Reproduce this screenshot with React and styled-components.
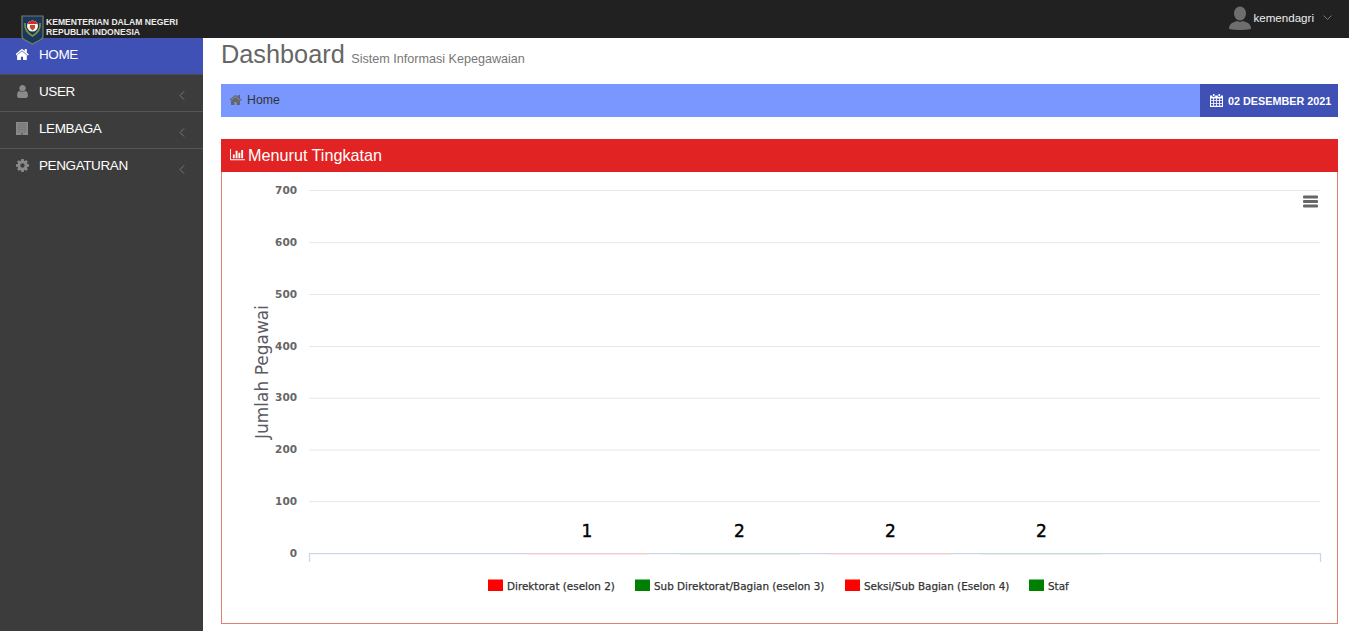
import React from "react";
import styled, { createGlobalStyle } from "styled-components";

const Global = createGlobalStyle`
  html, body { margin: 0; padding: 0; height: 100%; background: #fff; }
  body { font-family: "Liberation Sans", Arial, sans-serif; overflow: hidden; }
  * { box-sizing: border-box; }
`;

const Page = styled.div`width: 1349px; height: 631px; display: flex; flex-direction: column; position: relative;`;
const TopBar = styled.header`height: 38px; background: #212121; display: flex; align-items: center; justify-content: space-between; flex: none;`;
const Brand = styled.div`display: flex; align-items: flex-start; padding-left: 21px; height: 38px; position: relative; z-index: 2;`;
const Logo = styled.svg`width: 23px; height: 30px; margin-top: 15px; flex: none; margin-right: 2px;`;
const BrandText = styled.div`color: #eaeaea; font-size: 8.6px; font-weight: 700; line-height: 10px; margin-top: 17px; white-space: nowrap;`;
const UserBox = styled.div`display: flex; align-items: center; padding-right: 17px; color: #eee; font-size: 11.6px; height: 38px; padding-bottom: 3px;`;
const Avatar = styled.svg`width: 24px; height: 24px; fill: #6e6e6e; margin-right: 1px; margin-top: 1px;`;
const Caret = styled.svg`width: 9px; height: 6px; margin-left: 9px; fill: none; stroke: #777; stroke-width: 1;`;

const Body = styled.div`flex: 1; display: flex; min-height: 0;`;
const Sidebar = styled.nav`width: 203px; background: #3c3c3c; flex: none;`;
const NavItem = styled.div`
  height: 37px; display: flex; align-items: center; padding: 0 16px 4px 16px; font-size: 13.5px; letter-spacing: -0.4px;
  color: #fff; background: ${p => (p.$active ? "#3f51b5" : "transparent")};
  border-bottom: 1px solid ${p => (p.$active ? "#4c4c4c" : "#565656")};
  &:last-child { border-bottom-color: transparent; }
`;
const NavIcon = styled.svg`width: 13px; height: 13px; margin-right: 10px; flex: none; fill: ${p => (p.$active ? "#fff" : "#8a8a8a")};`;
const NavLabel = styled.span`flex: 1;`;
const Angle = styled.svg`width: 6px; height: 9px; margin: 9px 2px 0 0; fill: none; stroke: #777; stroke-width: 1;`;

const Main = styled.main`flex: 1; padding: 0 11px 0 18px; min-width: 0; display: flex; flex-direction: column;`;
const TitleRow = styled.div`height: 46px; display: flex; align-items: baseline; white-space: nowrap; padding-top: 2px;`;
const Title = styled.h1`margin: 0; font-size: 25.3px; font-weight: 400; color: #666;`;
const Sub = styled.small`font-size: 12.6px; color: #777; margin-left: 6.5px;`;
const Crumbs = styled.div`height: 33px; background: #7997ff; display: flex; justify-content: space-between; margin-bottom: 22px; flex: none;`;
const Crumb = styled.div`display: flex; align-items: center; padding: 0 0 1px 9px; color: #333; font-size: 12.3px;`;
const CrumbIcon = styled.svg`width: 12px; height: 12px; fill: #666; margin-right: 5px;`;
const DateBox = styled.div`width: 138px; background: #3f51b5; color: #fff; font-size: 10.8px; font-weight: 700; display: flex; align-items: center; padding-left: 10px; white-space: nowrap;`;
const CalIcon = styled.svg`width: 13px; height: 13px; fill: #fff; margin-right: 5px; flex: none;`;
const Panel = styled.section`height: 485px; border: 1px solid #e0806f; border-top: none; flex: none; display: flex; flex-direction: column;`;
const PanelHead = styled.div`height: 33px; margin: 0 -1px; background: #e12323; color: #fff; display: flex; align-items: center; padding: 0 0 0 9px; font-size: 16.2px; flex: none;`;
const HeadIcon = styled.svg`width: 15px; height: 13px; fill: #fff; margin-right: 3px;`;
const Chart = styled.svg`display: block; width: 1115px; height: 451px; font-family: "DejaVu Sans", sans-serif;`;

const HOME = "M1408 992v480q0 26-19 45t-45 19h-384v-384h-256v384h-384q-26 0-45-19t-19-45v-480q0-1 .5-3t.5-3l575-474 575 474q1 2 1 6zm223-69l-62 74q-8 9-21 11h-3q-13 0-21-7l-692-577-692 577q-12 8-24 7-13-2-21-11l-62-74q-8-10-7-23.5t11-21.5l719-599q32-26 76-26t76 26l244 204v-195q0-14 9-23t23-9h192q14 0 23 9t9 23v408l219 182q10 8 11 21.5t-7 23.5z";
const USER = "M1536 1399q0 109-62.5 187t-150.5 78h-854q-88 0-150.5-78t-62.5-187q0-85 8.5-160.5t31.5-152 58.5-131 94-89 134.5-34.5q131 128 313 128t313-128q76 0 134.5 34.5t94 89 58.5 131 31.5 152 8.5 160.5zm-256-887q0 159-112.5 271.5t-271.5 112.5-271.5-112.5-112.5-271.5 112.5-271.5 271.5-112.5 271.5 112.5 112.5 271.5z";
const COG = "M1152 896q0-106-75-181t-181-75-181 75-75 181 75 181 181 75 181-75 75-181zm512-109v222q0 12-8 23t-20 13l-185 28q-19 54-39 91 35 50 107 138 10 12 10 25t-9 23q-27 37-99 108t-94 71q-12 0-26-9l-138-108q-44 23-91 38-16 136-29 186-7 28-36 28h-222q-14 0-24.5-8.5t-11.5-21.5l-28-184q-49-16-90-37l-141 107q-10 9-25 9-14 0-25-11-126-114-165-168-7-10-7-23 0-12 8-23 15-21 51-66.5t54-70.5q-27-50-41-99l-183-27q-13-2-21-12.5t-8-23.5v-222q0-12 8-23t19-13l186-28q14-46 39-92-40-57-107-138-10-12-10-24 0-10 9-23 26-36 98.5-107.5t94.5-71.5q13 0 26 10l138 107q44-23 91-38 16-136 29-186 7-28 36-28h222q14 0 24.5 8.5t11.5 21.5l28 184q49 16 90 37l142-107q9-9 24-9 13 0 25 10 129 119 165 170 7 8 7 22 0 12-8 23-15 21-51 66.5t-54 70.5q26 50 41 98l183 28q13 2 21 12.5t8 23.5z";
const BARS = "M640 896v512h-256v-512h256zm384-512v1024h-256v-1024h256zm1024 1152v128h-2048v-1536h128v1408h1920zm-640-896v768h-256v-768h256zm384-384v1152h-256v-1152h256z";

const BuildingIcon = () => (
  <NavIcon viewBox="0 0 13 13">
    <path d="M0 0h12v13H0z" />
    <path fill="#6b6b6b" d="M1.500 1.500h9v.8h-9zM1.500 3.500h9v.8h-9zM1.500 5.500h9v.8h-9zM1.500 7.500h9v.8h-9zM1.500 9.500h3v.8h-3zM7.500 9.500h3v.8h-3zM5 10.500h2v2.500H5z" />
  </NavIcon>
);

const items = [
  { label: "HOME", d: HOME, active: true },
  { label: "USER", d: USER },
  { label: "LEMBAGA", building: true },
  { label: "PENGATURAN", d: COG },
];

const gridLines = [
  [700, 190.5], [600, 242.7], [500, 294.5], [400, 346.5], [300, 398.2], [200, 450], [100, 501.7], [0, 553.5],
];
const shift = (x) => x - 222;
const dy = (y) => y - 172;
const labels = [[587, "1"], [739.5, "2"], [890.5, "2"], [1041.5, "2"]];
const baseBars = [
  [527, 648, "#f4c9c9"], [679, 800, "#c9d9d5"], [830, 951, "#f4c9c9"], [981, 1102, "#c9d9d5"],
];
const legend = [
  [488, "#ff0000", 507, "Direktorat (eselon 2)"],
  [635, "#008000", 654, "Sub Direktorat/Bagian (eselon 3)"],
  [845, "#ff0000", 864, "Seksi/Sub Bagian (Eselon 4)"],
  [1029, "#008000", 1048, "Staf"],
];

export default function App() {
  return (
    <Page>
      <Global />
      <TopBar>
        <Brand>
          <Logo viewBox="0 0 23 30">
            <path d="M1 1h21v20q0 3-3 4l-7.500 4-7.500-4q-3-1-3-4z" fill="#173a5c" stroke="#7c7a62" strokeWidth="1.200" />
            <path d="M4 8q-1 8 7.500 13q8.500-5 7.500-13" fill="none" stroke="#8a8f3c" strokeWidth="1.600" />
            <circle cx="11.500" cy="11" r="5.500" fill="#f5f5f0" />
            <path d="M6.500 9a5.500 5.500 0 0 1 10 0z" fill="#d92a20" />
            <path d="M9 10h5v3l-2.500 2.500L9 13z" fill="#c8472a" />
          </Logo>
          <BrandText>
            KEMENTERIAN DALAM NEGERI
            <br />
            REPUBLIK INDONESIA
          </BrandText>
        </Brand>
        <UserBox>
          <Avatar viewBox="0 0 24 24">
            <ellipse cx="12" cy="7.500" rx="6" ry="7" />
            <path d="M1 23q0-5 4-6.500l4-1.500q3 1.500 6 0l4 1.500q4 1.500 4 6.500q-11 2-22 0z" />
          </Avatar>
          kemendagri
          <Caret viewBox="0 0 9 6"><path d="M.5.500l4 4 4-4" /></Caret>
        </UserBox>
      </TopBar>
      <Body>
        <Sidebar>
          {items.map((it) => (
            <NavItem key={it.label} $active={it.active}>
              {it.building ? (
                <BuildingIcon />
              ) : (
                <NavIcon viewBox="128 128 1536 1536" $active={it.active}><path d={it.d} /></NavIcon>
              )}
              <NavLabel>{it.label}</NavLabel>
              {!it.active && <Angle viewBox="0 0 6 9"><path d="M5 .500l-4 4 4 4" /></Angle>}
            </NavItem>
          ))}
        </Sidebar>
        <Main>
          <TitleRow>
            <Title>Dashboard</Title>
            <Sub>Sistem Informasi Kepegawaian</Sub>
          </TitleRow>
          <Crumbs>
            <Crumb>
              <CrumbIcon viewBox="128 128 1536 1536"><path d={HOME} /></CrumbIcon>
              Home
            </Crumb>
            <DateBox>
              <CalIcon viewBox="0 0 13 13">
                <path fillRule="evenodd" d="M3 0h1.500v2H3zM8.500 0H10v2H8.500zM0 1.500h2.200v1.200h3V1.500h2.600v1.200h3V1.500H13V13H0zM1 4.500v1.800h2.200V4.500zM4 4.500v1.800h2.100V4.500zM6.900 4.500v1.800H9V4.500zM9.800 4.500v1.800H12V4.500zM1 7.100v1.800h2.200V7.100zM4 7.100v1.800h2.100V7.100zM6.900 7.100v1.800H9V7.100zM9.800 7.100v1.800H12V7.100zM1 9.700v2.100h2.200V9.700zM4 9.700v2.100h2.100V9.700zM6.900 9.700v2.100H9V9.700zM9.800 9.700v2.100H12V9.700z" />
              </CalIcon>
              02 DESEMBER 2021
            </DateBox>
          </Crumbs>
          <Panel>
            <PanelHead>
              <HeadIcon viewBox="0 0 2048 1792"><path d={BARS} transform="translate(0 -128)" /></HeadIcon>
              Menurut Tingkatan
            </PanelHead>
            <Chart viewBox="0 0 1115 451">
              {gridLines.slice(0, -1).map(([v, y]) => (
                <line key={v} x1={shift(309)} x2={shift(1320)} y1={dy(y)} y2={dy(y)} stroke="#e6e6e6" />
              ))}
              {gridLines.map(([v, y]) => (
                <text key={v} x={shift(297)} y={dy(y) + 3} textAnchor="end" fontSize="10.500" fontWeight="700" fill="#666">{v}</text>
              ))}
              <path d={`M${shift(309.500)} ${dy(562)}V${dy(553.700)}H${shift(1320.500)}V${dy(562)}`} fill="none" stroke="#ccd6eb" strokeWidth="1.300" />
              {baseBars.map(([a, b, c]) => (
                <line key={a} x1={shift(a)} x2={shift(b)} y1={dy(553.700)} y2={dy(553.700)} stroke={c} strokeWidth="1.300" />
              ))}
              <text transform={`translate(${shift(268)} ${dy(372)}) rotate(-90)`} textAnchor="middle" fontSize="17" fill="#5a5a64">Jumlah Pegawai</text>
              {labels.map(([x, t], i) => (
                <text key={i} x={shift(x)} y={dy(537)} textAnchor="middle" fontSize="17" fill="#000" stroke="#000" strokeWidth="0.400">{t}</text>
              ))}
              {legend.map(([sx, c, tx, t]) => (
                <g key={t}>
                  <rect x={shift(sx)} y={dy(579.500)} width="15" height="11.500" fill={c} />
                  <text x={shift(tx)} y={dy(590)} fontSize="10.400" fill="#333" stroke="#333" strokeWidth="0.250">{t}</text>
                </g>
              ))}
              <g fill="#666">
                <rect x={shift(1303)} y={dy(195.500)} width="15" height="3" rx="1" />
                <rect x={shift(1303)} y={dy(200)} width="15" height="3" rx="1" />
                <rect x={shift(1303)} y={dy(204.500)} width="15" height="3" rx="1" />
              </g>
            </Chart>
          </Panel>
        </Main>
      </Body>
    </Page>
  );
}
